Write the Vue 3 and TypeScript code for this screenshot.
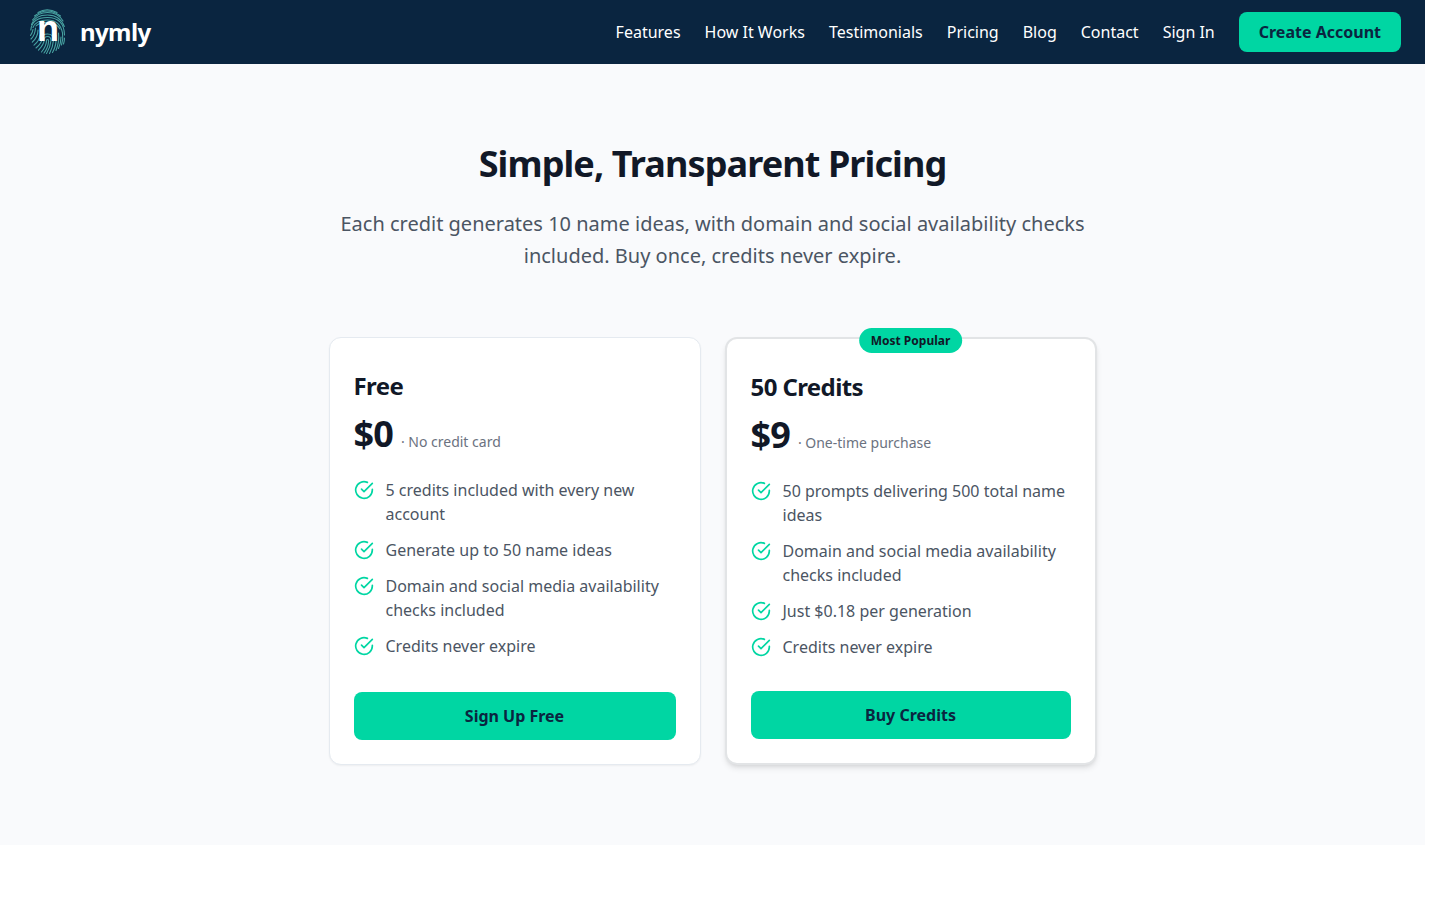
<script setup lang="ts">
interface Plan {
  name: string
  price: string
  note: string
  features: string[]
  action: string
  popular: boolean
}

const links: string[] = ['Features', 'How It Works', 'Testimonials', 'Pricing', 'Blog', 'Contact', 'Sign In']

const plans: Plan[] = [
  {
    name: 'Free',
    price: '$0',
    note: '· No credit card',
    features: [
      '5 credits included with every new account',
      'Generate up to 50 name ideas',
      'Domain and social media availability checks included',
      'Credits never expire',
    ],
    action: 'Sign Up Free',
    popular: false,
  },
  {
    name: '50 Credits',
    price: '$9',
    note: '· One-time purchase',
    features: [
      '50 prompts delivering 500 total name ideas',
      'Domain and social media availability checks included',
      'Just $0.18 per generation',
      'Credits never expire',
    ],
    action: 'Buy Credits',
    popular: true,
  },
]
</script>

<template>
  <div class="page">
    <header class="topbar">
      <a class="brand" href="#">
        <span class="mark">
          <svg viewBox="0 0 48 48" aria-hidden="true">
            <path d="M14 4.500Q23 -1 33 4.500" />
            <path d="M10.500 8Q23 -2 36.500 8" />
            <path d="M8.500 12Q14 4.500 23.500 4.500Q34 4.500 39 13" />
            <path d="M7.500 16.500Q11 7 23.500 7Q36 7 40.300 18.500" />
            <path d="M6.800 22Q8 9.500 23.500 9.500Q40 9.500 40.500 27" />
            <path d="M9 19.500Q12 12 23.500 12Q36 12 38.500 25Q39.500 31 37.500 37" />
            <path d="M12 18Q15 14.400 23.500 14.400Q32 14.400 36 21" />
            <path d="M6.500 27.500Q8.600 24.500 9 21.500" />
            <path d="M7 31Q11.200 27 11.500 20" />
            <path d="M8.300 34.200Q14 29 14 22" />
            <path d="M10 37.200Q16 32 16 27" />
            <path d="M12 40Q18 35 18 30.500Q18 26 23.500 26Q29.500 26 29.500 32Q29 39 25.500 45.500" />
            <path d="M14.500 42.200Q20.200 36 20.300 31.500Q20.300 28.500 23.500 28.500Q27 28.500 27 32.500Q26.500 39 22.500 45.500" />
            <path d="M17.500 44Q22.500 38 22.600 32Q24.600 30.500 24.600 33.500Q24 40 20 45" />
            <path d="M32 27Q33 37 28.500 44.500" />
            <path d="M34.500 25Q35.500 34 32 42.500" />
            <path d="M37 29Q36.800 36 34.500 40.500" />
            <path d="M40.500 30Q40.500 33 39.500 36" />
          </svg>
          <span class="letter">n</span>
        </span>
        <span class="wordmark">nymly</span>
      </a>
      <nav class="nav" aria-label="Main">
        <a v-for="link in links" :key="link" href="#">{{ link }}</a>
        <button type="button" class="btn create">Create Account</button>
      </nav>
    </header>

    <main class="pricing">
      <div class="intro">
        <h1>Simple, Transparent Pricing</h1>
        <p>Each credit generates 10 name ideas, with domain and social availability checks included. Buy once, credits never expire.</p>
      </div>
      <div class="plans">
        <article v-for="plan in plans" :key="plan.name" class="card" :class="{ popular: plan.popular }">
          <span v-if="plan.popular" class="badge">Most Popular</span>
          <h2>{{ plan.name }}</h2>
          <div class="cost">
            <span class="price">{{ plan.price }}</span>
            <span class="note">{{ plan.note }}</span>
          </div>
          <ul>
            <li v-for="feature in plan.features" :key="feature">
              <svg class="check" viewBox="0 0 24 24" aria-hidden="true">
                <path d="M22 11.080V12a10 10 0 1 1-5.930-9.140" />
                <path d="m9 11 3 3L22 4" />
              </svg>
              <span>{{ feature }}</span>
            </li>
          </ul>
          <button type="button" class="btn">{{ plan.action }}</button>
        </article>
      </div>
    </main>
  </div>
</template>

<style>
html {
  background: #ffffff;
}
</style>

<style scoped>
.page {
  margin-right: 15px;
  font-family: "Noto Sans", sans-serif;
  font-size: 16px;
  line-height: 24px;
}

.topbar {
  display: flex;
  align-items: center;
  justify-content: space-between;
  height: 64px;
  padding: 0 24px;
  background: #0a2540;
}

.brand {
  display: flex;
  align-items: center;
  gap: 8px;
  color: #ffffff;
  text-decoration: none;
}

.mark {
  position: relative;
  width: 48px;
  height: 48px;
}

.mark svg {
  display: block;
  fill: none;
  stroke: #48a3a2;
  stroke-width: 1.1;
  stroke-linecap: round;
}

.letter {
  position: absolute;
  inset: 0;
  font-family: "Liberation Sans", sans-serif;
  font-size: 36px;
  line-height: 42px;
  font-weight: 700;
  text-align: center;
}

.wordmark {
  font-size: 24px;
  line-height: 32px;
  font-weight: 700;
  letter-spacing: -0.025em;
}

.nav {
  display: flex;
  align-items: center;
  gap: 24px;
}

.nav a {
  color: #ffffff;
  text-decoration: none;
}

.btn {
  height: 48px;
  padding: 0 20px;
  border: 0;
  border-radius: 8px;
  background: #00d6a3;
  color: #0a2540;
  font: inherit;
  font-weight: 700;
  cursor: pointer;
}

.create {
  height: 40px;
}

.pricing {
  padding: 80px 24px;
  background: #f9fafc;
}

.intro {
  max-width: 768px;
  margin: 0 auto 65px;
  text-align: center;
}

h1 {
  margin: 0 0 24px;
  color: #111827;
  font-size: 36px;
  line-height: 40px;
  font-weight: 700;
  letter-spacing: -0.025em;
}

.intro p {
  margin: 0;
  color: #4b5563;
  font-size: 20px;
  line-height: 32px;
}

.plans {
  display: grid;
  grid-template-columns: 1fr 1fr;
  gap: 24px;
  max-width: 768px;
  margin: 0 auto;
}

.card {
  position: relative;
  display: flex;
  flex-direction: column;
  padding: 32px 24px 24px;
  border: 1px solid #e5eaf0;
  border-radius: 12px;
  background: #ffffff;
  box-shadow: 0 1px 2px rgba(0, 0, 0, 0.05);
}

.popular {
  border: 2px solid #e2e4e6;
  box-shadow: 0 4px 6px -1px rgba(0, 0, 0, 0.1), 0 2px 4px -2px rgba(0, 0, 0, 0.1);
}

.badge {
  position: absolute;
  top: -11px;
  left: 50%;
  transform: translateX(-50%);
  padding: 4px 12px;
  border-radius: 16px;
  background: #00d6a3;
  color: #111827;
  font-size: 12px;
  line-height: 17px;
  font-weight: 700;
  white-space: nowrap;
}

h2 {
  margin: 0 0 12px;
  color: #111827;
  font-size: 24px;
  line-height: 32px;
  font-weight: 700;
  letter-spacing: -0.025em;
}

.cost {
  display: flex;
  align-items: baseline;
  gap: 8px;
  margin-bottom: 24px;
}

.price {
  color: #111827;
  font-size: 36px;
  line-height: 40px;
  font-weight: 700;
  letter-spacing: -0.025em;
}

.note {
  color: #6b7280;
  font-size: 14px;
  line-height: 20px;
}

ul {
  display: flex;
  flex-direction: column;
  gap: 12px;
  margin: 0 0 32px;
  padding: 0;
  list-style: none;
  color: #4b5563;
}

li {
  display: flex;
  align-items: flex-start;
  gap: 12px;
}

.check {
  flex: none;
  width: 20px;
  height: 20px;
  margin-top: 2px;
  fill: none;
  stroke: #00d6a3;
  stroke-width: 2;
  stroke-linecap: round;
  stroke-linejoin: round;
}

.card .btn {
  margin-top: auto;
}
</style>
